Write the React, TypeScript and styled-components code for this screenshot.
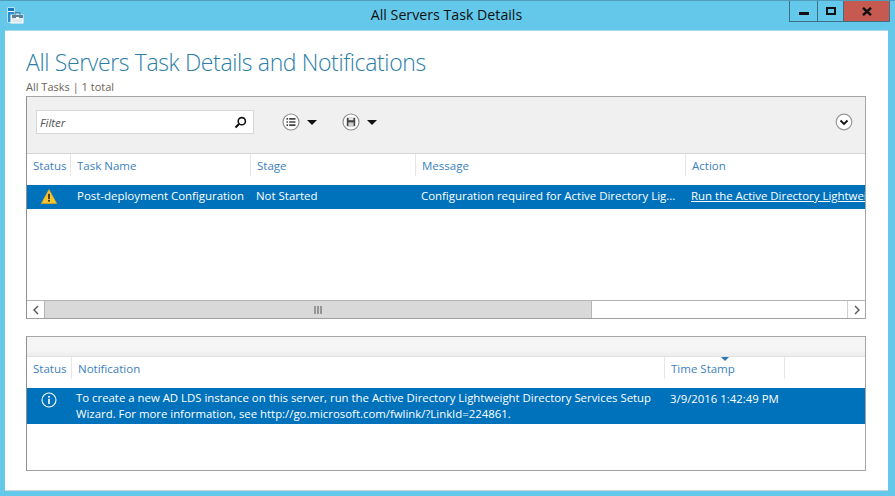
import styled, { createGlobalStyle } from 'styled-components';

const GlobalStyle = createGlobalStyle`
  html, body {
    margin: 0;
    padding: 0;
    background: #63c8ea;
  }
  body {
    font-family: "Open Sans", "Noto Sans", sans-serif;
  }
`;

const Window = styled.div`
  width: 895px;
  height: 496px;
  box-sizing: border-box;
  background: #63c8ea;
  border-top: 1px solid #4f9dba;
  display: flex;
  flex-direction: column;
  overflow: hidden;
`;

const TitleBar = styled.div`
  height: 29px;
  flex: none;
  display: flex;
  align-items: flex-start;
  position: relative;
`;

const AppIcon = styled.svg`
  width: 17px;
  height: 17px;
  margin: 6px 0 0 7px;
`;

const TitleText = styled.div`
  position: absolute;
  left: 0;
  right: 2px;
  top: 5px;
  text-align: center;
  font-size: 14.2px;
  line-height: 18px;
  color: #111;
`;

const WindowButtons = styled.div`
  margin-left: auto;
  margin-right: 5px;
  height: 20px;
  display: flex;
  border: 1px solid #3e6f82;
  border-top: none;
  box-sizing: content-box;
`;

const WindowButton = styled.div<{ $w: number; $close?: boolean }>`
  width: ${(p) => p.$w}px;
  height: 20px;
  display: flex;
  align-items: center;
  justify-content: center;
  background: ${(p) => (p.$close ? '#c75a50' : 'transparent')};
  & + & {
    border-left: 1px solid #3e6f82;
  }
`;

const Content = styled.div`
  flex: none;
  width: 883px;
  height: 461px;
  margin-left: 5px;
  box-sizing: border-box;
  background: #fff;
  border-top: 1px solid #a9d9ea;
  border-bottom: 1px solid #c9d6db;
  padding: 15px 21px 0;
`;

const Heading = styled.h1`
  margin: 0;
  font-size: 23px;
  line-height: 32px;
  font-weight: 300;
  letter-spacing: -0.37px;
  color: #2b7ea8;
  white-space: nowrap;
`;

const Summary = styled.div`
  font-size: 11px;
  line-height: 14px;
  margin-top: 2px;
  color: #6d6558;
`;

const Panel = styled.div<{ $h: number; $top: number }>`
  width: 840px;
  height: ${(p) => p.$h}px;
  margin-top: ${(p) => p.$top}px;
  box-sizing: border-box;
  border: 1px solid #a6a6a6;
  border-left-color: #8f8f8f;
  border-bottom-color: #a0a0a0;
  display: flex;
  flex-direction: column;
  background: #fff;
  overflow: hidden;
`;

const Toolbar = styled.div`
  height: 57px;
  flex: none;
  box-sizing: border-box;
  background: #f0f0f0;
  border-bottom: 1px solid #d4d4d4;
  display: flex;
  align-items: center;
  padding: 0 12px 6px 9px;
`;

const FilterBox = styled.div`
  width: 218px;
  height: 24px;
  box-sizing: border-box;
  background: #fff;
  border: 1px solid #d6d6d6;
  display: flex;
  align-items: center;
  justify-content: space-between;
  padding: 0 6px 0 3px;
`;

const FilterLabel = styled.span`
  font-size: 11.5px;
  font-style: italic;
  color: #555;
`;

const ToolGroup = styled.div<{ $left: number }>`
  display: flex;
  align-items: center;
  gap: 7px;
  margin-left: ${(p) => p.$left}px;
`;

const Caret = styled.span`
  width: 0;
  height: 0;
  border-left: 5.5px solid transparent;
  border-right: 5.5px solid transparent;
  border-top: 5px solid #111;
`;

const Expander = styled.svg`
  width: 18px;
  height: 18px;
  margin-left: auto;
`;

const HeaderRow = styled.div<{ $h: number }>`
  height: ${(p) => p.$h}px;
  flex: none;
  display: flex;
  background: #fff;
`;

const HeaderCell = styled.div<{ $w?: number }>`
  ${(p) => (p.$w ? `width: ${p.$w}px; flex: none;` : 'flex: 1;')}
  box-sizing: border-box;
  position: relative;
  padding: 3px 0 0 6px;
  font-size: 11.5px;
  line-height: 18px;
  color: #3c7fbd;
  white-space: nowrap;
  border-right: ${(p) => (p.$w ? '1px solid #e6e6e6' : 'none')};
  height: 22px;
`;

const SortMark = styled.span`
  position: absolute;
  top: 0;
  left: 56px;
  width: 0;
  height: 0;
  border-left: 4px solid transparent;
  border-right: 4px solid transparent;
  border-top: 4px solid #2a74b8;
`;

const SelectedRow = styled.div<{ $h: number; $size?: number }>`
  height: ${(p) => p.$h}px;
  flex: none;
  display: flex;
  background: #0072bc;
  color: #fff;
  font-size: ${(p) => p.$size ?? 11.5}px;
  line-height: 16px;
  overflow: hidden;
`;

const Cell = styled.div<{ $w?: number; $pad?: number }>`
  ${(p) => (p.$w ? `width: ${p.$w}px; flex: none;` : 'flex: 1;')}
  box-sizing: border-box;
  padding: 3px 0 0 ${(p) => p.$pad ?? 5}px;
  white-space: nowrap;
  overflow: hidden;
`;

const IconCell = styled.div`
  width: 44px;
  flex: none;
  display: flex;
  justify-content: center;
  padding-top: 4px;
`;

const WrappedCell = styled(Cell)`
  white-space: normal;
  padding-top: 2px;
`;

const ActionLink = styled.span`
  text-decoration: underline;
`;

const RowSpace = styled.div`
  flex: 1;
`;

const ScrollBar = styled.div`
  height: 18px;
  flex: none;
  display: flex;
  background: #fff;
  border-top: 1px solid #b5b5b5;
  box-sizing: border-box;
`;

const ScrollButton = styled.div`
  width: 17px;
  flex: none;
  display: flex;
  align-items: center;
  justify-content: center;
`;

const ScrollThumb = styled.div`
  width: 548px;
  flex: none;
  background: #d9d9d9;
  border-left: 1px solid #b5b5b5;
  border-right: 1px solid #b5b5b5;
  box-sizing: border-box;
  display: flex;
  align-items: center;
  justify-content: center;
`;

const ScrollTrack = styled.div`
  flex: 1;
  border-right: 1px solid #d0d0d0;
`;

const Grip = styled.svg`
  width: 8px;
  height: 8px;
`;

const TopBand = styled.div`
  height: 20px;
  flex: none;
  box-sizing: border-box;
  background: linear-gradient(#f5f5f5 0, #f5f5f5 70%, #ececec 100%);
  border-bottom: 1px solid #e2e2e2;
`;

export default function App() {
  return (
    <>
      <GlobalStyle />
      <Window>
        <TitleBar>
          <AppIcon viewBox="0 0 17 17">
            <rect x="0.5" y="0.5" width="7" height="15" fill="#fff" />
            <rect x="1" y="1" width="6" height="3" fill="#1878c0" />
            <rect x="1" y="5" width="6" height="10" fill="#2a8ed0" />
            <rect x="4" y="8" width="12" height="8" fill="#dfe8ee" stroke="#fff" />
            <rect x="5" y="8" width="11" height="3" fill="#5f7f94" />
            <rect x="8" y="5.5" width="5" height="3" fill="none" stroke="#5f7f94" />
            <rect x="9" y="10" width="3" height="2" fill="#fff" />
          </AppIcon>
          <TitleText>All Servers Task Details</TitleText>
          <WindowButtons>
            <WindowButton $w={27}>
              <svg width="10" height="10" viewBox="0 0 10 10">
                <rect x="0" y="6" width="10" height="3" fill="#111" />
              </svg>
            </WindowButton>
            <WindowButton $w={25}>
              <svg width="10" height="8" viewBox="0 0 10 8">
                <rect x="1" y="1" width="8" height="6" fill="none" stroke="#111" strokeWidth="2" />
              </svg>
            </WindowButton>
            <WindowButton $w={45} $close>
              <svg width="10" height="9" viewBox="0 0 10 9">
                <path d="M1 0.8 L9 8.2 M9 0.8 L1 8.2" stroke="#111" strokeWidth="2.4" />
              </svg>
            </WindowButton>
          </WindowButtons>
        </TitleBar>
        <Content>
          <Heading>All Servers Task Details and Notifications</Heading>
          <Summary>All Tasks | 1 total</Summary>
          <Panel $h={223} $top={2}>
            <Toolbar>
              <FilterBox>
                <FilterLabel>Filter</FilterLabel>
                <svg width="13" height="13" viewBox="0 0 13 13">
                  <circle cx="7.8" cy="5.2" r="3.6" fill="none" stroke="#111" strokeWidth="1.6" />
                  <path d="M5 8 L1.5 11.5" stroke="#111" strokeWidth="2.2" />
                </svg>
              </FilterBox>
              <ToolGroup $left={28}>
                <svg width="18" height="18" viewBox="0 0 18 18">
                  <circle cx="9" cy="9" r="8" fill="#fff" stroke="#8e8e8e" strokeWidth="1.2" />
                  <path d="M4.5 5.8h1.6M4.5 9h1.6M4.5 12.2h1.6M7.2 5.8h6.3M7.2 9h6.3M7.2 12.2h6.3" stroke="#444" strokeWidth="1.7" />
                </svg>
                <Caret />
              </ToolGroup>
              <ToolGroup $left={25}>
                <svg width="18" height="18" viewBox="0 0 18 18">
                  <circle cx="9" cy="9" r="8" fill="#fff" stroke="#8e8e8e" strokeWidth="1.2" />
                  <path d="M4.8 4.8h8.4v8.4h-8.4z" fill="#444" />
                  <rect x="6.6" y="4.8" width="4.8" height="2.4" fill="#e8e8e8" />
                  <rect x="6.4" y="9.4" width="5.2" height="3.8" fill="#cfcfcf" />
                </svg>
                <Caret />
              </ToolGroup>
              <Expander viewBox="0 0 18 18">
                <circle cx="9" cy="9" r="7.8" fill="#fff" stroke="#9a9a9a" strokeWidth="1.2" />
                <path d="M5.5 7.5 L9 11 L12.5 7.5" fill="none" stroke="#111" strokeWidth="1.8" />
              </Expander>
            </Toolbar>
            <HeaderRow $h={31}>
              <HeaderCell $w={44}>Status</HeaderCell>
              <HeaderCell $w={180}>Task Name</HeaderCell>
              <HeaderCell $w={165}>Stage</HeaderCell>
              <HeaderCell $w={270}>Message</HeaderCell>
              <HeaderCell>Action</HeaderCell>
            </HeaderRow>
            <SelectedRow $h={24} $size={11.45}>
              <IconCell>
                <svg width="16" height="15" viewBox="0 0 16 15">
                  <path d="M8 0.5 L15.7 14.5 H0.3 Z" fill="#f6c52e" stroke="#e8a910" strokeWidth="0.6" />
                  <rect x="7.2" y="4.8" width="1.6" height="5.4" fill="#222" />
                  <rect x="7.2" y="11" width="1.6" height="1.7" fill="#222" />
                </svg>
              </IconCell>
              <Cell $w={180} $pad={6}>Post-deployment Configuration</Cell>
              <Cell $w={165}>Not Started</Cell>
              <Cell $w={270}>Configuration required for Active Directory Lig...</Cell>
              <Cell>
                <ActionLink>Run the Active Directory Lightweight Directory</ActionLink>
              </Cell>
            </SelectedRow>
            <RowSpace />
            <ScrollBar>
              <ScrollButton>
                <svg width="8" height="10" viewBox="0 0 8 10">
                  <path d="M6 1 L2 5 L6 9" fill="none" stroke="#555" strokeWidth="1.4" />
                </svg>
              </ScrollButton>
              <ScrollThumb>
                <Grip viewBox="0 0 8 8">
                  <path d="M1 0v8M4 0v8M7 0v8" stroke="#555" strokeWidth="1" />
                </Grip>
              </ScrollThumb>
              <ScrollTrack />
              <ScrollButton>
                <svg width="8" height="10" viewBox="0 0 8 10">
                  <path d="M2 1 L6 5 L2 9" fill="none" stroke="#555" strokeWidth="1.4" />
                </svg>
              </ScrollButton>
            </ScrollBar>
          </Panel>
          <Panel $h={135} $top={17}>
            <TopBand />
            <HeaderRow $h={31}>
              <HeaderCell $w={45}>Status</HeaderCell>
              <HeaderCell $w={593}>Notification</HeaderCell>
              <HeaderCell $w={120}>
                <SortMark />
                Time Stamp
              </HeaderCell>
              <HeaderCell />
            </HeaderRow>
            <SelectedRow $h={36} $size={11.38}>
              <IconCell>
                <svg width="16" height="16" viewBox="0 0 16 16">
                  <circle cx="8" cy="8" r="7" fill="none" stroke="#fff" strokeWidth="1.1" />
                  <rect x="7.2" y="6.8" width="1.6" height="5.2" fill="#fff" />
                  <rect x="7.2" y="4" width="1.6" height="1.7" fill="#fff" />
                </svg>
              </IconCell>
              <WrappedCell $w={593} $pad={5}>
                To create a new AD LDS instance on this server, run the Active Directory Lightweight Directory Services Setup Wizard. For more information, see http://go.microsoft.com/fwlink/?LinkId=224861.
              </WrappedCell>
              <Cell $w={150} $pad={6}>3/9/2016 1:42:49 PM</Cell>
            </SelectedRow>
            <RowSpace />
          </Panel>
        </Content>
      </Window>
    </>
  );
}
